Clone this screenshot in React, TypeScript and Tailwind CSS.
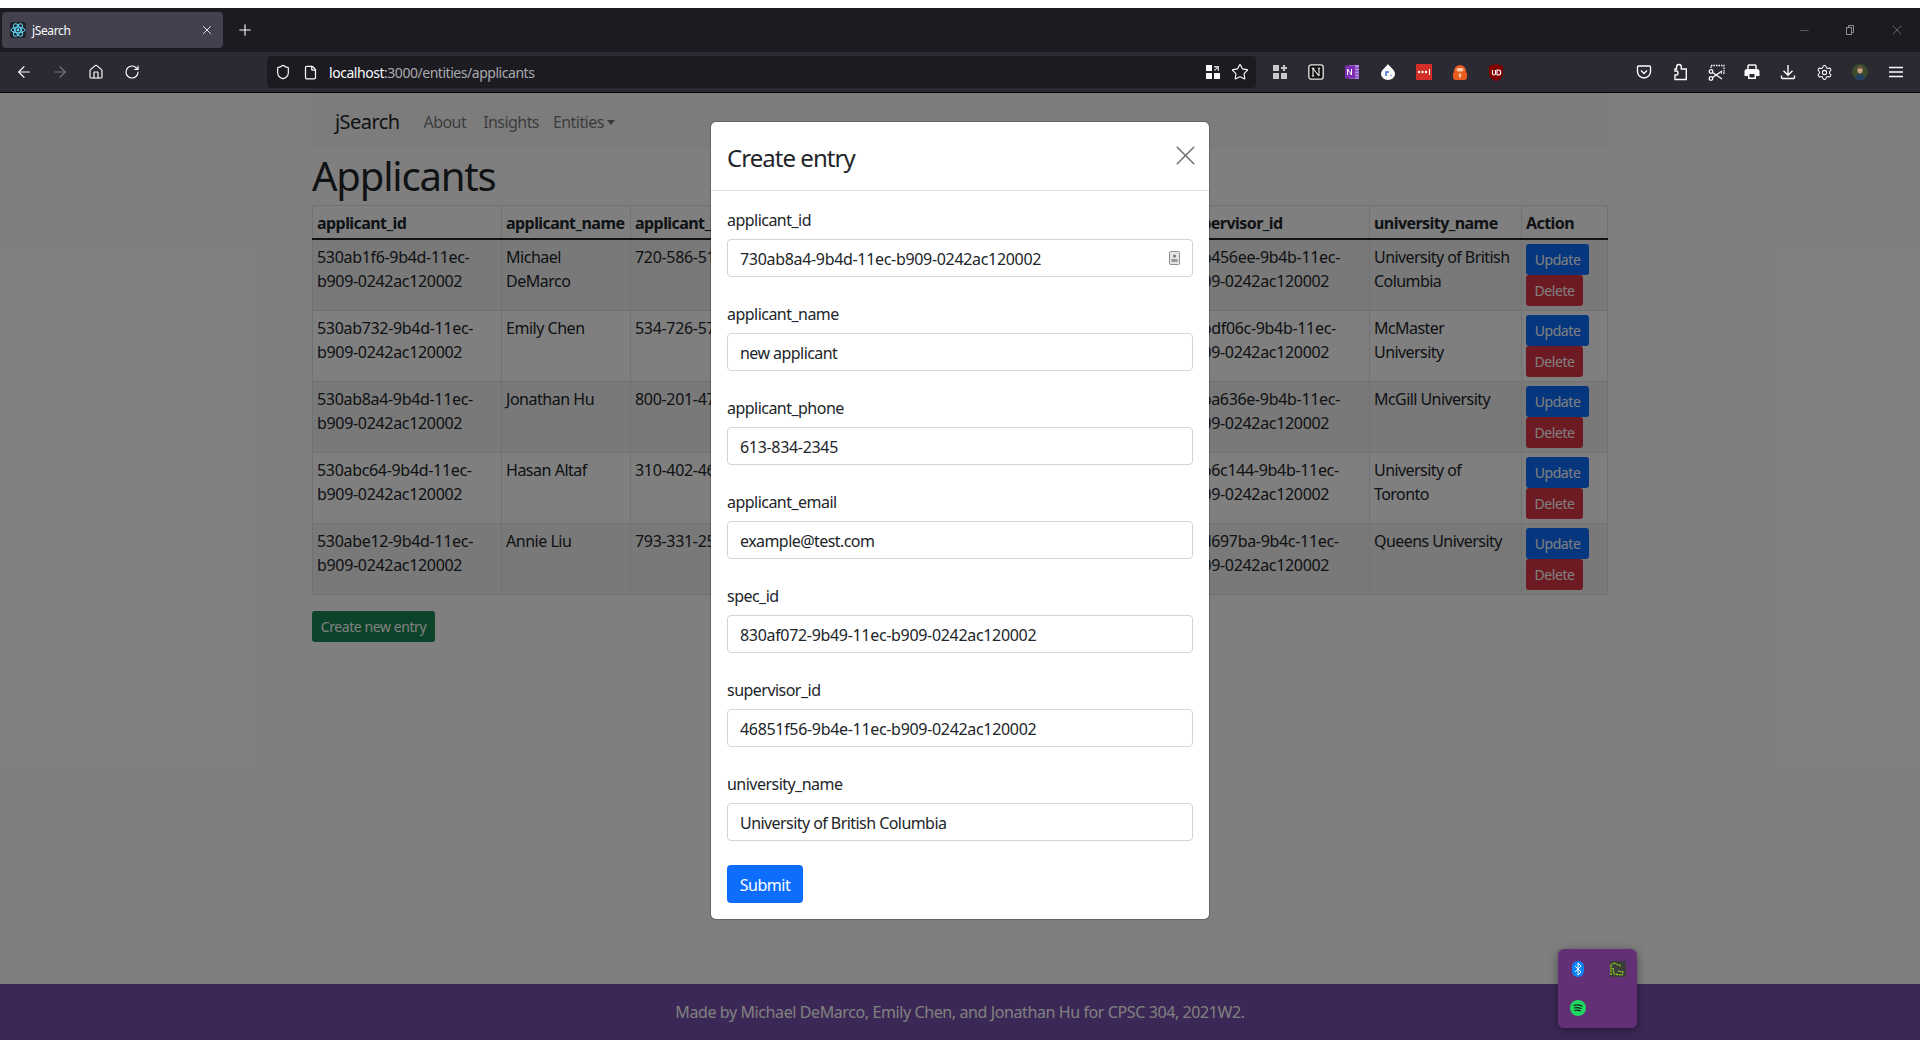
import { ArrowLeft, ArrowRight, File, Home, Minus, Plus, RotateCw, Settings, Shield, Star, X } from 'lucide-react';

const rows = [
  ['530ab1f6-9b4d-11ec-b909-0242ac120002', 'Michael DeMarco', '720-586-5142', 'michael@example.com', '830af072-9b49-11ec-b909-0242ac120002', '46b456ee-9b4b-11ec-b909-0242ac120002', 'University of British Columbia'],
  ['530ab732-9b4d-11ec-b909-0242ac120002', 'Emily Chen', '534-726-5761', 'emily@example.com', '830af072-9b49-11ec-b909-0242ac120002', '46bdf06c-9b4b-11ec-b909-0242ac120002', 'McMaster University'],
  ['530ab8a4-9b4d-11ec-b909-0242ac120002', 'Jonathan Hu', '800-201-4783', 'jonathan@example.com', '830af072-9b49-11ec-b909-0242ac120002', '46ba636e-9b4b-11ec-b909-0242ac120002', 'McGill University'],
  ['530abc64-9b4d-11ec-b909-0242ac120002', 'Hasan Altaf', '310-402-4618', 'hasan@example.com', '830af072-9b49-11ec-b909-0242ac120002', '46b6c144-9b4b-11ec-b909-0242ac120002', 'University of Toronto'],
  ['530abe12-9b4d-11ec-b909-0242ac120002', 'Annie Liu', '793-331-2590', 'annie@example.com', '830af072-9b49-11ec-b909-0242ac120002', '46d697ba-9b4c-11ec-b909-0242ac120002', 'Queens University'],
];

const fields = [
  ['applicant_id', '730ab8a4-9b4d-11ec-b909-0242ac120002'],
  ['applicant_name', 'new applicant'],
  ['applicant_phone', '613-834-2345'],
  ['applicant_email', 'example@test.com'],
  ['spec_id', '830af072-9b49-11ec-b909-0242ac120002'],
  ['supervisor_id', '46851f56-9b4e-11ec-b909-0242ac120002'],
  ['university_name', 'University of British Columbia'],
];

const headers = ['applicant_id', 'applicant_name', 'applicant_phone', 'applicant_email', 'spec_id', 'supervisor_id', 'university_name', 'Action'];

function ToolButton({ children }: { children?: React.ReactNode }) {
  return <div className="w-9 h-8 flex items-center justify-center text-[#fbfbfe] shrink-0">{children}</div>;
}

function TabBar() {
  return (
    <div className="h-11 bg-[#1c1b22] flex items-center pl-[2px] text-[#fbfbfe] shrink-0">
      <div className="w-[221px] h-9 bg-[#42414d] rounded flex items-center pl-2 pr-[9px] text-xs">
        <svg width="16" height="16" viewBox="0 0 16 16" className="shrink-0">
          <rect width="16" height="16" rx="2" fill="#20232a" />
          <g fill="none" stroke="#61dafb" strokeWidth="1">
            <ellipse cx="8" cy="8" rx="7" ry="2.8" />
            <ellipse cx="8" cy="8" rx="7" ry="2.8" transform="rotate(60 8 8)" />
            <ellipse cx="8" cy="8" rx="7" ry="2.8" transform="rotate(120 8 8)" />
          </g>
          <circle cx="8" cy="8" r="1.4" fill="#61dafb" />
        </svg>
        <span className="ml-[6px] flex-1 pt-[2px] tracking-[-0.03em]">jSearch</span>
        <X size={14} strokeWidth={1.5} />
      </div>
      <div className="ml-[10px] w-6 flex justify-center">
        <Plus size={18} strokeWidth={1.5} />
      </div>
      <div className="flex-1" />
      <div className="flex items-center text-[#8b8b8f]">
        <Minus size={13} strokeWidth={1} className="mr-[33px]" />
        <svg width="12" height="12" viewBox="0 0 12 12" fill="none" stroke="currentColor" className="mr-[33px]">
          <rect x="2.500" y="3.500" width="5" height="7" />
          <path d="M4.500 3.500v-2h5v7h-2" />
        </svg>
        <X size={16} strokeWidth={1} className="mr-[15px]" />
      </div>
    </div>
  );
}

function Toolbar() {
  return (
    <div className="h-[41px] bg-[#2b2a33] border-b border-black flex items-start pt-1 pl-[6px] pr-[6px] shrink-0">
      <ToolButton><ArrowLeft size={18} strokeWidth={1.5} /></ToolButton>
      <ToolButton><ArrowRight size={18} strokeWidth={1.5} className="text-[#75747b]" /></ToolButton>
      <ToolButton><Home size={16} strokeWidth={1.75} /></ToolButton>
      <ToolButton><RotateCw size={16} strokeWidth={1.75} /></ToolButton>
      <div className="ml-[117px] w-[989px] h-8 bg-[#1c1b22] rounded flex items-center text-[#fbfbfe] pl-2 shrink-0">
        <Shield size={16} strokeWidth={1.75} />
        <File size={15} strokeWidth={2} className="ml-3" />
        <span className="ml-[11px] text-sm pt-[2px] tracking-[-0.033em]"><span>localhost</span><span className="text-[#a9a9ad]">:3000/entities/applicants</span></span>
        <div className="flex-1" />
        <svg width="14" height="14" viewBox="0 0 14 14" fill="currentColor">
          <rect x="0" y="0" width="6" height="6" />
          <rect x="8" y="8" width="6" height="6" />
          <rect x="0" y="8" width="6" height="6" />
          <path d="M8 1h5v5h-1.400V3.200L9 6 8 5l2.700-2.600H8z" fill="#c9c9cc" />
        </svg>
        <Star size={18} strokeWidth={1.5} className="ml-[11px] mr-[7px]" />
      </div>
      <div className="ml-[6px] flex">
        <ToolButton>
          <svg width="14" height="14" viewBox="0 0 14 14" fill="#c9c9cc">
            <rect x="0" y="0" width="6" height="6" />
            <rect x="0" y="8" width="6" height="6" />
            <rect x="8" y="8" width="6" height="6" />
            <path d="M10 0h2v2h2v2h-2v2h-2V4H8V2h2z" />
          </svg>
        </ToolButton>
        <ToolButton>
          <svg width="16" height="16" viewBox="0 0 16 16">
            <rect x="0.800" y="0.800" width="14.400" height="14.400" rx="2.500" fill="#111" stroke="#e6e6e6" strokeWidth="1.300" />
            <path d="M5 12V4.500M5 4.500l6 7.500M11 12V4.500M3.800 4.300h2.600M9.800 4.300h2.400M3.800 12h2.400" stroke="#f2f2f2" strokeWidth="1.100" fill="none" />
          </svg>
        </ToolButton>
        <ToolButton>
          <svg width="16" height="16" viewBox="0 0 16 16">
            <rect x="5" y="1" width="10" height="14" fill="#b48ce0" />
            <path d="M10 4h5M10 7h5M10 10h5M10 13h5" stroke="#7b2fb0" />
            <rect x="1" y="1.500" width="10" height="13" fill="#7b2fb0" />
            <path d="M3.500 11V5l4 6V5" stroke="#fff" strokeWidth="1" fill="none" />
          </svg>
        </ToolButton>
        <ToolButton>
          <svg width="14" height="16" viewBox="0 0 14 16">
            <path d="M7 0c2 3 7 6 7 10a7 6 0 0 1-14 0C0 6 5 3 7 0z" fill="#fff" />
            <path d="M5 12V8h3M9.500 11.500h1" stroke="#3b6fd8" strokeWidth="1.600" fill="none" />
          </svg>
        </ToolButton>
        <ToolButton>
          <svg width="16" height="16" viewBox="0 0 16 16">
            <rect width="16" height="16" fill="#d32d27" />
            <circle cx="3" cy="8" r="1.200" fill="#fff" />
            <circle cx="6.500" cy="8" r="1.200" fill="#fff" />
            <circle cx="10" cy="8" r="1.200" fill="#fff" />
            <rect x="13" y="5" width="1" height="6" fill="#fff" />
          </svg>
        </ToolButton>
        <ToolButton>
          <svg width="16" height="16" viewBox="0 0 16 16">
            <path d="M2 7a6 6 0 0 1 12 0v1.500l1 .500v4a3 3 0 0 1-3 3H4a3 3 0 0 1-3-3V9l1-.500z" fill="#e85d1f" />
            <rect x="4.500" y="4" width="7" height="3.500" rx="1.700" fill="#f6c7a8" />
            <circle cx="8" cy="11" r="1.400" fill="#f6c7a8" />
            <rect x="7.400" y="11" width="1.200" height="3" fill="#f6c7a8" />
          </svg>
        </ToolButton>
        <ToolButton>
          <svg width="14" height="17" viewBox="0 0 14 17">
            <path d="M7 0l7 2v8c0 3-4 6-7 7-3-1-7-4-7-7V2z" fill="#800000" />
            <path d="M3.500 6v3.500a1.500 1.500 0 0 0 3 0V6M8 6v5h1.200a2.500 2.500 0 0 0 0-5z" stroke="#fff" fill="none" strokeWidth="1.100" />
          </svg>
        </ToolButton>
      </div>
      <div className="flex-1" />
      <ToolButton>
        <svg width="16" height="16" viewBox="0 0 16 16" fill="none" stroke="currentColor" strokeWidth="1.400">
          <path d="M2.500 2h11a1 1 0 0 1 1 1v4.500a6.500 6.500 0 0 1-13 0V3a1 1 0 0 1 1-1z" />
          <path d="M5 6.500l3 3 3-3" />
        </svg>
      </ToolButton>
      <ToolButton>
        <svg width="16" height="18" viewBox="0 0 16 18" fill="none" stroke="currentColor" strokeWidth="1.400">
          <path d="M7 1.500c1.500 0 2.300 1 2.300 2.300V6h5v10.500H3V12h1.500c2 0 2-4 0-4H3V6h1.600V3.800C4.600 2.500 5.500 1.500 7 1.500z" />
        </svg>
      </ToolButton>
      <ToolButton>
        <svg width="17" height="17" viewBox="0 0 17 17" fill="none" stroke="currentColor" strokeWidth="1.300">
          <path d="M3 4V1.500h13V9h-3" strokeDasharray="1.500 1" />
          <circle cx="3" cy="14.500" r="1.800" />
          <circle cx="3" cy="7.500" r="1.800" />
          <path d="M4.500 13.500L14 7M4.500 8.500l9.500 6.500" />
        </svg>
      </ToolButton>
      <ToolButton>
        <svg width="16" height="16" viewBox="0 0 16 16">
          <path d="M4 6V2a1 1 0 0 1 1-1h6a1 1 0 0 1 1 1v4" fill="none" stroke="#fbfbfe" strokeWidth="1.500" />
          <path d="M3 5h10a2.500 2.500 0 0 1 2.500 2.500V12H12v3H4v-3H.5V7.500A2.500 2.500 0 0 1 3 5z" fill="#fbfbfe" />
          <rect x="5.500" y="10" width="5" height="3.500" fill="#2b2a33" />
        </svg>
      </ToolButton>
      <ToolButton>
        <svg width="16" height="16" viewBox="0 0 16 16" fill="none" stroke="currentColor" strokeWidth="1.400">
          <path d="M8 1v10M3.500 6.800L8 11.300l4.500-4.500M1.500 11.500v2a1 1 0 0 0 1 1h11a1 1 0 0 0 1-1v-2" />
        </svg>
      </ToolButton>
      <ToolButton><Settings size={17} strokeWidth={1.5} /></ToolButton>
      <ToolButton>
        <svg width="16" height="16" viewBox="0 0 16 16">
          <circle cx="8" cy="8" r="8" fill="#3e4a2c" />
          <ellipse cx="8" cy="6" rx="2.600" ry="3.400" fill="#c9a483" />
          <path d="M5.300 4.500c.500-2 5-2 5.400 0z" fill="#5a4027" />
          <path d="M3 15c.500-4 3-5 5-5s4.500 1 5 5a8 8 0 0 1-10 0z" fill="#24405f" />
        </svg>
      </ToolButton>
      <ToolButton>
        <svg width="16" height="14" viewBox="0 0 16 14" fill="none" stroke="currentColor" strokeWidth="1.500">
          <path d="M1 2.500h14M1 7h14M1 11.500h14" />
        </svg>
      </ToolButton>
    </div>
  );
}

function Page() {
  return (
    <div className="flex-1 flex flex-col min-h-0 bg-white text-[#212529]">
      <div className="flex-1 w-[1296px] mx-auto">
        <nav className="h-14 pt-[2px] bg-[#f8f9fa] flex items-center pl-[23px] tracking-[-0.035em]">
          <span className="text-xl">jSearch</span>
          <span className="ml-6 text-black/55">About</span>
          <span className="ml-[17px] text-black/55">Insights</span>
          <span className="ml-[14px] text-black/55 flex items-center">
            Entities
            <span className="ml-[3px] border-t-[5px] border-x-[4px] border-t-black/55 border-x-transparent" />
          </span>
        </nav>
        <h1 className="text-[40px] h-12 pt-[3px] leading-[48px] mb-2 tracking-[-0.03em]">Applicants</h1>
        <table className="w-[1295px] table-fixed border-collapse mb-4">
          <colgroup>
            <col className="w-[189px]" />
            <col className="w-[129px]" />
            <col className="w-[135px]" />
            <col className="w-[227px]" />
            <col className="w-[187px]" />
            <col className="w-[190px]" />
            <col className="w-[152px]" />
            <col className="w-[86px]" />
          </colgroup>
          <thead>
            <tr>
              {headers.map((h) => (
                <th key={h} className="border border-[#dee2e6] border-b-[#212529] border-b-2 pt-[5px] pb-[3px] px-1 text-left font-bold whitespace-nowrap overflow-hidden tracking-[-0.035em]">{h}</th>
              ))}
            </tr>
          </thead>
          <tbody>
            {rows.map((r, i) => (
              <tr key={r[0]} className={i % 2 === 0 ? 'bg-black/5' : ''}>
                <td className="border border-[#dee2e6] pt-[5px] pb-[3px] px-1 align-top">{r[0]}</td>
                <td className="border border-[#dee2e6] pt-[5px] pb-[3px] px-1 align-top tracking-[-0.03em]">{r[1]}</td>
                <td className="border border-[#dee2e6] pt-[5px] pb-[3px] px-1 align-top">{r[2]}</td>
                <td className="border border-[#dee2e6] pt-[5px] pb-[3px] px-1 align-top tracking-[-0.03em]">{r[3]}</td>
                <td className="border border-[#dee2e6] pt-[5px] pb-[3px] px-1 align-top">{r[4]}</td>
                <td className="border border-[#dee2e6] pt-[5px] pb-[3px] px-1 align-top">{r[5]}</td>
                <td className="border border-[#dee2e6] pt-[5px] pb-[3px] px-1 align-top tracking-[-0.035em]">{r[6]}</td>
                <td className="border border-[#dee2e6] p-1 align-top">
                  <button className="block h-[31px] w-[63px] pt-[1px] text-sm bg-[#0d6efd] text-white rounded-[3px] tracking-[-0.03em]">Update</button>
                  <button className="block h-[31px] w-[57px] pt-[1px] text-sm bg-[#dc3545] text-white rounded-[3px] tracking-[-0.03em]">Delete</button>
                </td>
              </tr>
            ))}
          </tbody>
        </table>
        <button className="h-[31px] w-[123px] text-sm bg-[#198754] text-white rounded-[3px] tracking-[-0.03em]">Create new entry</button>
      </div>
      <footer className="h-14 bg-[#7850ac] text-white flex items-center justify-center shrink-0 tracking-[-0.025em]">
        Made by Michael DeMarco, Emily Chen, and Jonathan Hu for CPSC 304, 2021W2.
      </footer>
    </div>
  );
}

function Modal() {
  return (
    <div className="absolute inset-x-0 top-[93px] bottom-0 bg-black/50 flex justify-center items-start pt-[29px]">
      <div className="w-[498px] bg-white rounded-[5px] ring-1 ring-black/20 text-[#212529]">
        <div className="h-[69px] border-b border-[#dee2e6] flex items-center justify-between pl-4 pr-[7px]">
          <span className="text-2xl pt-[3px] tracking-[-0.04em]">Create entry</span>
          <X size={33} strokeWidth={1.1} className="text-[#6f6f6f] -mt-[1px]" />
        </div>
        <div className="p-4">
          {fields.map(([label, value], i) => (
            <div key={label} className="mb-6">
              <label className="block h-6 pt-[1px] leading-6 mb-2 tracking-[-0.033em]">{label}</label>
              <div className="relative">
                <input readOnly value={value} className={`block w-full h-[38px] border border-[#ced4da] rounded px-3 pt-[2px] text-[#212529] bg-white ${i === 1 || i === 3 || i === 6 ? 'tracking-[-0.035em]' : ''}`} />
                {i === 0 && (
                  <svg width="11" height="14" viewBox="0 0 11 14" className="absolute right-[13px] top-[12px]">
                    <rect x="0.500" y="0.500" width="10" height="13" rx="1" fill="#e4e4e4" stroke="#8d8d8d" />
                    <circle cx="5.500" cy="5" r="1.500" fill="#777" />
                    <rect x="2.500" y="8" width="6" height="3" fill="#999" />
                  </svg>
                )}
              </div>
            </div>
          ))}
          <button className="block h-[38px] w-[76px] pt-[2px] bg-[#0d6efd] text-white rounded tracking-[-0.03em]">Submit</button>
        </div>
      </div>
    </div>
  );
}

function TrayPopup() {
  return (
    <div className="absolute left-[1558px] top-[949px] w-[79px] h-[79px] rounded-[6px] bg-[#633075] shadow-[0_2px_10px_rgba(0,0,0,0.4)] grid grid-cols-2 grid-rows-2">
      <div className="flex items-center justify-center">
        <svg width="12" height="16" viewBox="0 0 12 16">
          <rect width="12" height="16" rx="6" fill="#0a84ff" />
          <path d="M3 5l6 6-3 3V2l3 3-6 6" stroke="#fff" fill="none" />
        </svg>
      </div>
      <div className="flex items-center justify-center pl-[1px]">
        <svg width="16" height="16" viewBox="0 0 16 16">
          <rect width="16" height="16" fill="#3c3c3c" />
          <path d="M1 14V4l3-2 7 3M3 7l1 6 8 1 1-3-5-1" stroke="#8fd11a" strokeWidth="1.300" fill="none" strokeDasharray="2 .7" />
        </svg>
      </div>
      <div className="flex items-center justify-center">
        <svg width="16" height="16" viewBox="0 0 16 16">
          <circle cx="8" cy="8" r="8" fill="#1ed760" />
          <path d="M3.500 5.500c3-1 6-.8 9 .8M4 8c2.500-.8 5-.6 7.500.7M4.500 10.500c2-.6 4.500-.4 6.300.6" stroke="#1b1b1b" strokeWidth="1.200" fill="none" />
        </svg>
      </div>
    </div>
  );
}

export default function App() {
  return (
    <div className="relative h-screen overflow-hidden flex flex-col bg-white pt-2 font-['Noto_Sans',sans-serif] tracking-[-0.02em]">
      <TabBar />
      <Toolbar />
      <Page />
      <Modal />
      <TrayPopup />
    </div>
  );
}
